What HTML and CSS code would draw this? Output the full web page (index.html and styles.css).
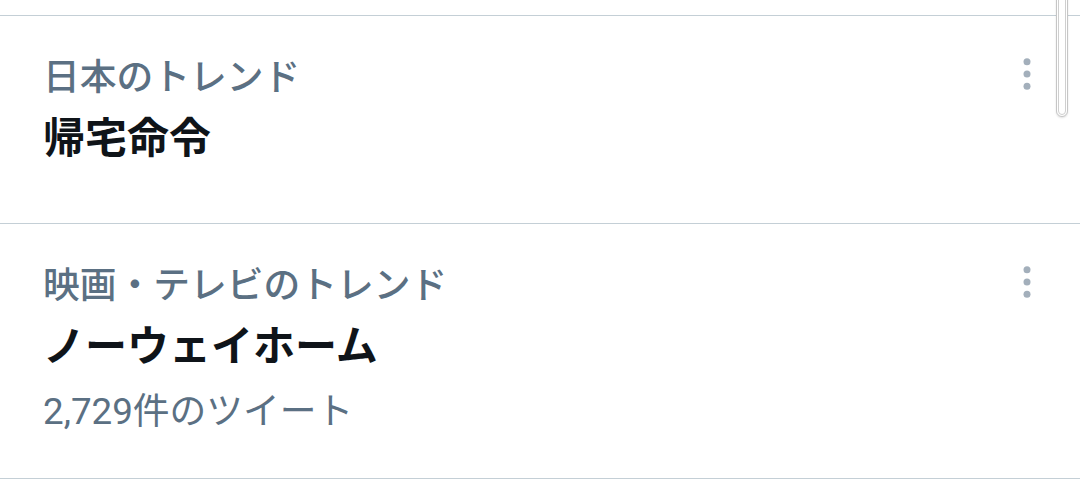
FILE: index.html
```html
<!DOCTYPE html>
<html lang="ja">
<head>
    <meta charset="UTF-8">
    <meta name="viewport" content="width=device-width, initial-scale=1.0">
    <title>トレンド</title>
    <link rel="stylesheet" href="styles.css">
</head>
<body>
    <div class="trend-list">
        <div class="trend trend-short">
            <div class="trend-body">
                <div class="trend-context">日本のトレンド</div>
                <div class="trend-title">帰宅命令</div>
            </div>
            <button class="more-btn" aria-label="その他">
                <svg viewBox="0 0 24 24"><circle cx="12" cy="5" r="2"/><circle cx="12" cy="12" r="2"/><circle cx="12" cy="19" r="2"/></svg>
            </button>
        </div>
        <div class="trend">
            <div class="trend-body">
                <div class="trend-context">映画・テレビのトレンド</div>
                <div class="trend-title">ノーウェイホーム</div>
                <div class="trend-count">2,729件のツイート</div>
            </div>
            <button class="more-btn" aria-label="その他">
                <svg viewBox="0 0 24 24"><circle cx="12" cy="5" r="2"/><circle cx="12" cy="12" r="2"/><circle cx="12" cy="19" r="2"/></svg>
            </button>
        </div>
    </div>

    <!-- overlay scrollbar thumb -->
    <div class="scroll-thumb"><div class="scroll-thumb-inner"></div></div>
</body>
</html>
```

FILE: styles.css
```css
body {
    margin: 0;
    background: #fff;
    font-family: Roboto, "Noto Sans CJK JP", sans-serif;
    color: #0f1419;
    overflow: hidden;
}
.trend-list {
    margin-top: 15px;
    border-top: 1px solid #c4cfd6;
}
.trend {
    display: flex;
    align-items: flex-start;
    padding: 36px 32px 40px 43px;
    border-bottom: 1px solid #c4cfd6;
}
.trend-short {
    padding-bottom: 58px;
}
.trend-body {
    flex: 1;
}
.trend-context {
    font-size: 36.75px;
    line-height: 52px;
    font-weight: 500;
    color: #5b7083;
}
.trend-title {
    margin-top: 9px;
    font-size: 42px;
    line-height: 52px;
    font-weight: 700;
    color: #0f1419;
}
.trend-count {
    margin-top: 13px;
    font-size: 36.75px;
    line-height: 52px;
    color: #5b7083;
}
.more-btn {
    margin-top: 1px;
    width: 42px;
    height: 42px;
    padding: 0;
    border: none;
    background: none;
}
.more-btn svg {
    display: block;
    width: 42px;
    height: 42px;
    fill: #a3afbb;
}
.scroll-thumb {
    position: absolute;
    top: -20px;
    right: 12px;
    width: 10px;
    height: 135px;
    border: 1px solid #c6c6c6;
    border-radius: 6px;
    background: #fff;
    box-shadow: 0 1px 2px rgba(0, 0, 0, 0.12);
}
.scroll-thumb-inner {
    margin: 1px;
    height: calc(100% - 4px);
    border: 1px solid #cfcfcf;
    border-radius: 4px;
}
```
